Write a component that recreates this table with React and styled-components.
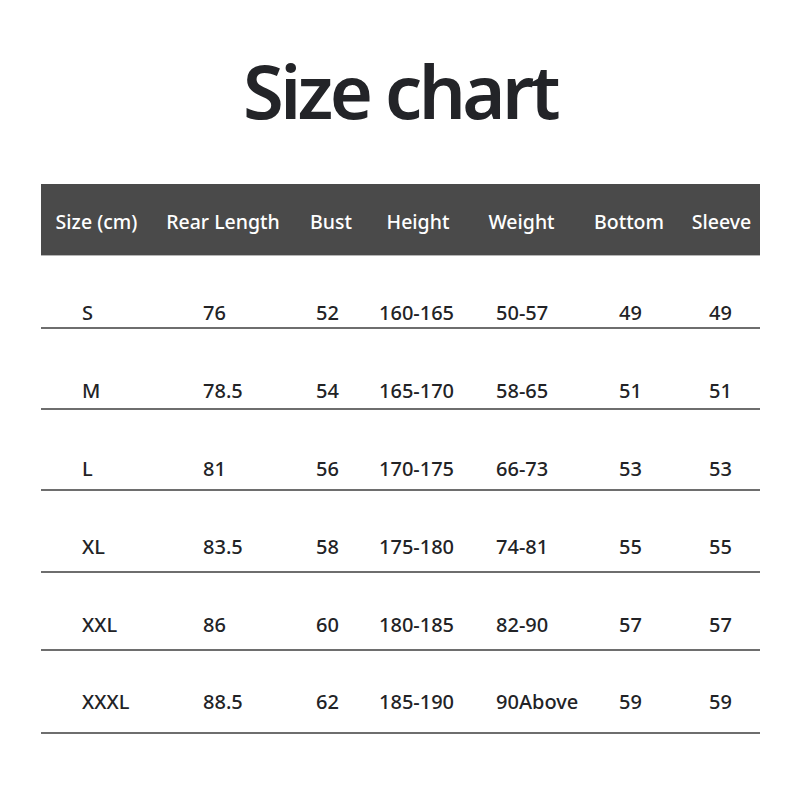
import styled, { createGlobalStyle } from "styled-components";

const GlobalStyle = createGlobalStyle`
    html, body {
        margin: 0;
        padding: 0;
        background: #ffffff;
    }
    body {
        font-family: "Noto Sans", "Open Sans", sans-serif;
        color: #222326;
    }
`

const Page = styled.div`
    width: 800px;
    height: 800px;
    background: #fff;
    padding-top: 47px;
    box-sizing: border-box;
`

const Title = styled.h1`
    margin: 0;
    text-align: center;
    font-size: 74px;
    font-weight: 600;
    line-height: 88px;
    letter-spacing: -3.6px;
    color: #232428;
`

const Table = styled.div`
    width: 719px;
    margin: 49px 0 0 41px;
`

const Row = styled.div`
    display: grid;
    grid-template-columns: ${props => props.cols};
    height: ${props => props.h}px;
    box-sizing: border-box;
    padding-top: ${props => props.pt}px;
    border-bottom: 2px solid #6e6e6e;
`

const Header = styled.div`
    display: grid;
    grid-template-columns: ${props => props.cols};
    height: 71px;
    background: #4a4a4a;
    border-bottom: 1px solid #b5b5b5;
    align-items: center;
`

const HeadCell = styled.div`
    text-align: center;
    color: #fff;
    font-size: 19.5px;
    font-weight: 500;
    white-space: nowrap;
    margin-top: 3px;
`

const Cell = styled.div`
    padding-left: ${props => props.pad}px;
    font-size: 20px;
    font-weight: 500;
    line-height: 24px;
    color: #222326;
    white-space: nowrap;
`

const columns = [
    { name: "Size (cm)", w: 111, pad: 41 },
    { name: "Rear Length", w: 142, pad: 51 },
    { name: "Bust", w: 74, pad: 22 },
    { name: "Height", w: 100, pad: 11 },
    { name: "Weight", w: 107, pad: 28 },
    { name: "Bottom", w: 108, pad: 44 },
    { name: "Sleeve", w: 77, pad: 26 },
]

const rows = [
    { h: 73, pt: 45, data: ["S", "76", "52", "160-165", "50-57", "49", "49"] },
    { h: 81, pt: 50, data: ["M", "78.5", "54", "165-170", "58-65", "51", "51"] },
    { h: 81, pt: 47, data: ["L", "81", "56", "170-175", "66-73", "53", "53"] },
    { h: 82, pt: 44, data: ["XL", "83.5", "58", "175-180", "74-81", "55", "55"] },
    { h: 78, pt: 40, data: ["XXL", "86", "60", "180-185", "82-90", "57", "57"] },
    { h: 83, pt: 39, data: ["XXXL", "88.5", "62", "185-190", "90Above", "59", "59"] },
]

const cols = columns.map(c => c.w + "px").join(" ")

const App = () => {
    return (
        <Page>
            <GlobalStyle />
            <Title>Size chart</Title>
            <Table>
                <Header cols={cols}>
                    {columns.map(c => (
                        <HeadCell key={c.name}>{c.name}</HeadCell>
                    ))}
                </Header>
                {rows.map(r => (
                    <Row key={r.data[0]} cols={cols} h={r.h} pt={r.pt}>
                        {r.data.map((v, i) => (
                            <Cell key={i} pad={columns[i].pad}>{v}</Cell>
                        ))}
                    </Row>
                ))}
            </Table>
        </Page>
    )
}

export default App
